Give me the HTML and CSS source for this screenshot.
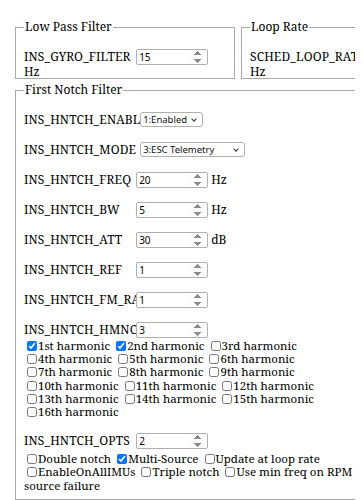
FILE: index.html
```html
<!DOCTYPE html>
<html lang="en">

<head>
  <meta charset="UTF-8">
  <meta name="viewport" content="width=device-width, initial-scale=1.0">
  <title>Notch Filter Parameters</title>
  <link rel="stylesheet" href="styles.css">
</head>

<body>
  <div class="page">
    <div class="top-row">
      <fieldset class="box box-small">
        <legend>Low Pass Filter</legend>
        <div class="param"><label>INS_GYRO_FILTER</label> <input type="number" value="15"> <span class="unit">Hz</span></div>
      </fieldset>

      <fieldset class="box box-small">
        <legend>Loop Rate</legend>
        <div class="param"><label>SCHED_LOOP_RATE</label> <input type="number" value="400"> <span class="unit">Hz</span></div>
      </fieldset>
    </div>

    <fieldset class="box box-notch">
      <legend>First Notch Filter</legend>

      <div class="param"><label>INS_HNTCH_ENABLE</label> <span class="select-wrap"><select class="sel-enable">
          <option value="0">0:Disabled</option>
          <option value="1" selected>1:Enabled</option>
        </select></span></div>

      <div class="param"><label>INS_HNTCH_MODE</label> <span class="select-wrap"><select class="sel-mode">
          <option value="0">0:Fixed</option>
          <option value="1">1:Throttle</option>
          <option value="2">2:RPM Sensor</option>
          <option value="3" selected>3:ESC Telemetry</option>
          <option value="4">4:Dynamic FFT</option>
        </select></span></div>

      <div class="param"><label>INS_HNTCH_FREQ</label> <input type="number" value="20"> Hz</div>
      <div class="param"><label>INS_HNTCH_BW</label> <input type="number" value="5"> Hz</div>
      <div class="param"><label>INS_HNTCH_ATT</label> <input type="number" value="30"> dB</div>
      <div class="param"><label>INS_HNTCH_REF</label> <input type="number" value="1"></div>
      <div class="param"><label>INS_HNTCH_FM_RAT</label> <input type="number" value="1"></div>
      <div class="param"><label>INS_HNTCH_HMNCS</label> <input type="number" value="3"></div>

      <div class="bits bits-nowrap" id="harmonics"></div>

      <div class="param param-opts"><label>INS_HNTCH_OPTS</label> <input type="number" value="2"></div>
      <div class="bits bits-opts" id="options"></div>
    </fieldset>
  </div>

  <script>
    // Build the bitmask checkbox lists
    function addBits(id, names, value) {
      const box = document.getElementById(id);
      names.forEach((name, index) => {
        const label = document.createElement('label');
        const head = document.createElement('span');
        const check = document.createElement('input');
        const words = name.split(' ');
        check.type = 'checkbox';
        check.checked = (value >> index) & 1;
        // keep the box together with the first word
        head.className = 'bit-head';
        head.appendChild(check);
        head.appendChild(document.createTextNode(words.shift()));
        label.appendChild(head);
        if (words.length) {
          label.appendChild(document.createTextNode(' ' + words.join(' ')));
        }
        box.appendChild(label);
        box.appendChild(document.createTextNode(' '));
      });
    }

    const harmonics = [];
    const suffix = ['st', 'nd', 'rd'];
    for (let i = 1; i <= 16; i++) {
      const s = (i <= 3) ? suffix[i - 1] : 'th';
      harmonics.push(i + s + ' harmonic');
    }
    addBits('harmonics', harmonics, 3);

    addBits('options', ['Double notch', 'Multi-Source', 'Update at loop rate', 'EnableOnAllIMUs', 'Triple notch', 'Use min freq on RPM source failure'], 2);
  </script>
</body>

</html>
```

FILE: styles.css
```css
html,
body {
  overflow: hidden;
}

body {
  margin: 8px;
  font-family: "Noto Serif", "Liberation Serif", serif;
  font-size: 11px;
  line-height: 13px;
  color: #000;
  background: #fff;
}

.page {
  padding: 12px 0 0 7px;
  width: 420px;
}

.top-row {
  display: flex;
  gap: 6px;
  margin-bottom: 4px;
}

.box {
  margin: 0;
  padding: 1px 8px 7px 8px;
  border: 1px solid #a8a8a8;
}

.box legend {
  padding: 0 1px;
  font-size: 12px;
  line-height: 14px;
}

.box-small {
  flex: none;
  width: 202px;
  padding-bottom: 0;
}

.box-small .unit {
  display: block;
  line-height: 13px;
}

.box-notch {
  width: 342px;
}

.param {
  margin-top: 14px;
  font-size: 12px;
  line-height: 16px;
}

.param-opts {
  margin-top: 15px;
}

.param label {
  display: inline-block;
  width: 109px;
  white-space: nowrap;
  letter-spacing: 0.15px;
}

.param input {
  width: 72px;
  height: 16px;
  box-sizing: border-box;
  margin: 0;
  padding: 0 2px;
  font-family: "Noto Sans", sans-serif;
  font-size: 10px;
  border: 1px solid #b0b0b0;
  border-radius: 2px;
  vertical-align: top;
}

.param input::-webkit-inner-spin-button {
  opacity: 1;
}

.select-wrap {
  position: relative;
  display: inline-block;
  margin-left: 4px;
  vertical-align: top;
}

.select-wrap::after {
  content: "";
  position: absolute;
  right: 7px;
  top: 5px;
  width: 3px;
  height: 3px;
  border-right: 1px solid #333;
  border-bottom: 1px solid #333;
  transform: rotate(45deg);
  pointer-events: none;
}

.param select {
  -webkit-appearance: none;
  appearance: none;
  display: block;
  height: 15px;
  margin: 0;
  padding: 0 0 0 2px;
  font-family: "Noto Sans", sans-serif;
  font-size: 9.5px;
  line-height: 13px;
  color: #111;
  background: #fff;
  border: 1px solid #b0b0b0;
  border-radius: 3px;
}

.sel-enable {
  width: 63px;
}

.sel-mode {
  width: 105px;
}

.bits {
  font-size: 11.5px;
  line-height: 13.2px;
  margin-top: 1px;
}

.bits-opts {
  margin-top: 3px;
}

.bits-nowrap label,
.bit-head {
  white-space: nowrap;
}

.bits input {
  width: 10px;
  height: 10px;
  margin: 0 1px 0 3px;
  vertical-align: -1px;
}
```
